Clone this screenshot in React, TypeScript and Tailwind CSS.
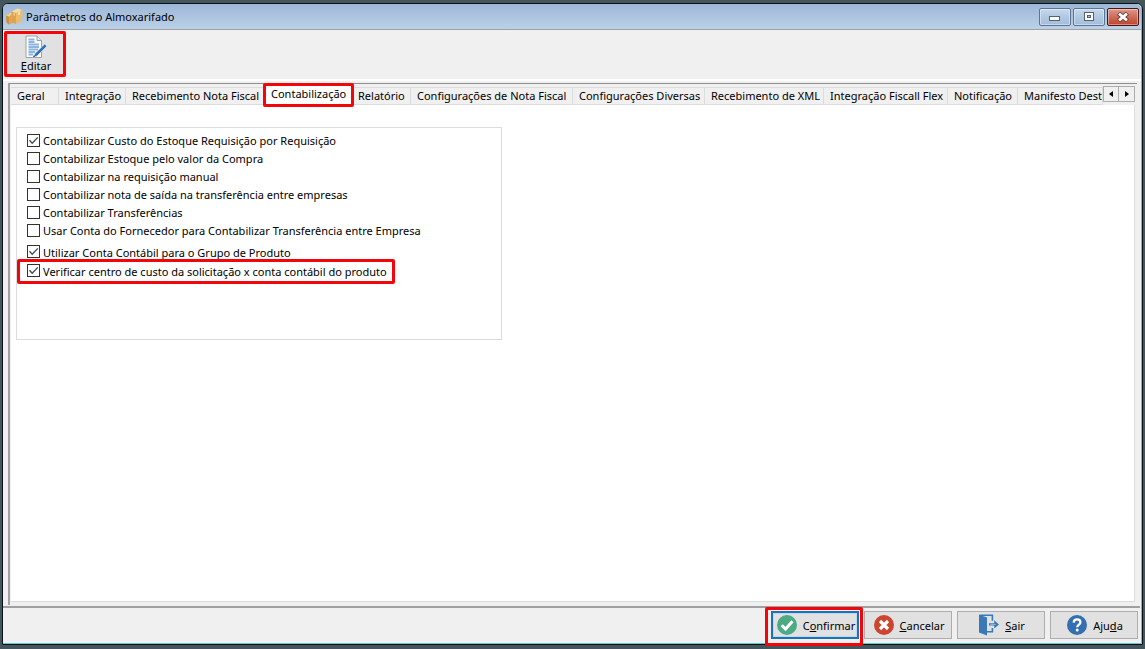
import { useState } from "react";
import type { ReactNode } from "react";

const tabs = [
  { name: "Geral", width: "w-[48px] shrink-0" },
  { name: "Integração", width: "w-[67px] shrink-0" },
  { name: "Recebimento Nota Fiscal", width: "w-[139px] shrink-0" },
  { name: "Contabilização", width: "w-[87px] shrink-0" },
  { name: "Relatório", width: "w-[59px] shrink-0" },
  { name: "Configurações de Nota Fiscal", width: "w-[162px] shrink-0" },
  { name: "Configurações Diversas", width: "w-[132px] shrink-0" },
  { name: "Recebimento de XML", width: "w-[119px] shrink-0" },
  { name: "Integração Fiscall Flex", width: "w-[124px] shrink-0" },
  { name: "Notificação", width: "w-[70px] shrink-0" },
  { name: "Manifesto Dest", width: "min-w-0 flex-1 overflow-hidden" },
];

const costOptions = [
  { id: "custo", label: "Contabilizar Custo do Estoque Requisição por Requisição", on: true },
  { id: "compra", label: "Contabilizar Estoque pelo valor da Compra", on: false },
  { id: "manual", label: "Contabilizar na requisição manual", on: false },
  { id: "saida", label: "Contabilizar nota de saída na transferência entre empresas", on: false },
  { id: "transf", label: "Contabilizar Transferências", on: false },
  { id: "fornecedor", label: "Usar Conta do Fornecedor para Contabilizar Transferência entre Empresa", on: false },
];

function Highlight({ place }: { place: string }) {
  return (
    <span
      aria-hidden="true"
      className={`pointer-events-none absolute z-10 rounded-[2px] border-3 border-[#f2060a] ${place}`}
    />
  );
}

function Option({ id, label, on }: { id: string; label: string; on: boolean }) {
  return (
    <>
      <span className="relative mb-[2px] size-[13px] shrink-0">
        <input
          id={id}
          type="checkbox"
          defaultChecked={on}
          className="peer block size-[13px] appearance-none border border-[#333] bg-white"
        />
        <svg
          viewBox="0 0 13 13"
          className="pointer-events-none absolute inset-0 hidden size-[13px] peer-checked:block"
          fill="none"
          stroke="#3c4a55"
          strokeWidth="1.3"
        >
          <path d="M2.5 6.3 5.2 9.2 10.8 3.4" />
        </svg>
      </span>
      <label htmlFor={id} className="whitespace-nowrap">
        {label}
      </label>
    </>
  );
}

function BoxIcon() {
  return (
    <svg viewBox="0 0 17 17" className="size-[17px] shrink-0">
      <path d="M0 7.5 5 4.5 8 5.5V14.5L3 16.5 .5 14.5Z" fill="#e0a850" />
      <path d="M0 7.5 3 8.5V16.5L.5 14.5Z" fill="#c99144" />
      <path d="M0 7.5 5 4.5 7 5.5 3 8.5Z" fill="#f3d090" />
      <path d="M5.5 3.5 11.5 .5 16.5 2 10 5Z" fill="#f8dca4" />
      <path d="M5.5 3.5 10 5V16L5.5 14Z" fill="#dba44c" />
      <path d="M10 5 16.5 2 16 12.5 10 16Z" fill="#eebc69" />
      <path d="M12.4 3.9 14 3.2V6.5L12.4 7.3Z" fill="#fbe9c0" />
      <path d="M7.5 4.2 8.8 4.6V8L7.5 7.5Z" fill="#f4d190" />
    </svg>
  );
}

function EditIcon() {
  return (
    <svg viewBox="0 0 22 24" className="h-6 w-[22px]">
      <path d="M1 1H12L16.5 5.5V22.5H1Z" fill="#fafcfd" stroke="#9aa2a7" />
      <path d="M12 1V5.5H16.5" fill="#e2e6e9" stroke="#9aa2a7" />
      <path d="M3.5 4.5H9.5M3.5 7H9.5M3.5 9.5H14M3.5 12H14M3.5 14.5H13M3.5 17H10M3.5 19.5H8" stroke="#8db6df" strokeWidth="1.8" />
      <path d="M19.7 9 21.9 11.2 12 21 8 22.5 9.7 18.8Z" fill="#2f70b7" stroke="#f4f7f9" strokeWidth=".6" />
      <path d="M8 22.5 8.8 20.6 10 21.7Z" fill="#22384f" />
    </svg>
  );
}

function ConfirmIcon() {
  return (
    <svg viewBox="0 0 20 20" className="size-5">
      <circle cx="10" cy="10" r="10" fill="#4caa84" />
      <path d="M4.7 10.2 8.5 14 15.5 6.3" fill="none" stroke="#fff" strokeWidth="3" />
    </svg>
  );
}

function CancelIcon() {
  return (
    <svg viewBox="0 0 20 20" className="size-5">
      <circle cx="10" cy="10" r="10" fill="#cb4530" />
      <path d="M6 6 14 14M14 6 6 14" fill="none" stroke="#fff" strokeWidth="3.2" />
    </svg>
  );
}

function ExitIcon() {
  return (
    <svg viewBox="0 0 20 22" className="h-[22px] w-5">
      <path d="M1 1.3H13.4V6.8M13.4 14V17.8H8" fill="none" stroke="#3a78b8" strokeWidth="1.6" />
      <path d="M0 .5 8 3.5V21.5L0 18.5Z" fill="#3a78b8" />
      <path d="M10 9.3H15.2V6.3L20 10.4 15.2 14.5V11.5H10Z" fill="#3a78b8" />
      <path d="M11.2 10.4H16.8" stroke="#a9c6e2" strokeWidth=".8" />
    </svg>
  );
}

function HelpIcon() {
  return (
    <svg viewBox="0 0 20 20" className="size-5">
      <circle cx="10" cy="10" r="10" fill="#346fb0" />
      <path d="M6.7 7.6C6.8 5.4 8.2 4.4 10.1 4.4 12.1 4.4 13.4 5.6 13.4 7.2 13.4 9.5 10.2 9.6 10.2 12.2" fill="none" stroke="#fff" strokeWidth="2.3" />
      <circle cx="10.2" cy="15" r="1.5" fill="#fff" />
    </svg>
  );
}

function CaptionButton({ label, danger, children }: { label: string; danger?: boolean; children: ReactNode }) {
  const tone = danger
    ? "border-[#4e1512] from-[#dc9a8c] via-[#cf6f5c] via-45% to-[#c0432a]"
    : "border-[#5d7590] from-[#c7d9ec] via-[#b2cae4] via-45% to-[#a3bddb]";
  return (
    <button
      type="button"
      aria-label={label}
      className={`flex h-[18px] w-8 items-center justify-center rounded-[2px] border bg-linear-to-b shadow-[inset_0_0_0_1px_rgba(255,255,255,0.4)] ${tone}`}
    >
      {children}
    </button>
  );
}

function FooterButton({ icon, focused, children }: { icon: ReactNode; focused?: boolean; children: ReactNode }) {
  const frame = focused
    ? "border-2 border-[#2070b4] shadow-[inset_0_0_0_1px_#b5dcf2]"
    : "border border-[#adadad]";
  return (
    <button type="button" className={`flex h-7 w-[88px] items-center justify-center gap-[6px] bg-[#e1e1e1] pl-[2px] ${frame}`}>
      {icon}
      <span className="pt-px">{children}</span>
    </button>
  );
}

export default function App() {
  const [active, setActive] = useState("Contabilização");

  return (
    <div className="flex h-screen flex-col bg-[#43565b] px-[2px] pt-[3px] pb-1 font-['Noto_Sans',sans-serif] text-[11px] leading-4 text-black">
      <div className="flex min-h-0 flex-1 flex-col rounded-t-md border border-[#0a1218] bg-[#f0f0f0] shadow-[inset_-1px_-1px_0_#62c4d6]">
        <header className="mr-px flex h-[25px] shrink-0 items-center gap-[3px] rounded-t-[5px] bg-linear-to-b from-[#9db7d7] to-[#bbd1e9] pr-[2px] pl-[3px]">
          <BoxIcon />
          <h1 className="flex-1">Parâmetros do Almoxarifado</h1>
          <div className="flex gap-[2px]">
            <CaptionButton label="Minimizar">
              <svg viewBox="0 0 12 8" className="h-2 w-3">
                <rect x=".5" y="3.5" width="10" height="4" fill="#fff" stroke="#55636f" />
              </svg>
            </CaptionButton>
            <CaptionButton label="Maximizar">
              <svg viewBox="0 0 12 9" className="h-[9px] w-3">
                <rect x="1.5" y=".5" width="9" height="8" fill="#fff" stroke="#55636f" />
                <rect x="4.5" y="3.5" width="3" height="2" fill="#a9c2de" stroke="#55636f" />
              </svg>
            </CaptionButton>
            <CaptionButton label="Fechar" danger>
              <svg viewBox="0 0 12 10" className="h-[10px] w-3">
                <path d="M1.5 1.3 10.5 8.7M10.5 1.3 1.5 8.7" stroke="#59302f" strokeWidth="4.4" />
                <path d="M2 1.7 10 8.3M10 1.7 2 8.3" stroke="#fff" strokeWidth="2.8" />
              </svg>
            </CaptionButton>
          </div>
        </header>

        <div className="mr-px flex h-[52px] shrink-0 items-start border-t border-b-2 border-t-[#a0a0a0] border-b-white px-px pt-px">
          <button type="button" className="relative flex h-[46px] w-[62px] flex-col items-center bg-[#e1e1e1] pt-[4px] pl-[2px]">
            <EditIcon />
            <span className="leading-[14px]">
              <u>E</u>ditar
            </span>
            <Highlight place="inset-0" />
          </button>
        </div>

        <main className="mx-[5px] mt-[2px] flex min-h-0 flex-1 flex-col border-t border-l-2 border-t-[#8f8f8f] border-l-[#a2a2a6] pr-[2px] pb-[3px] pl-px">
          <div className="flex shrink-0 items-start pt-[2px]">
            <div role="tablist" className="flex h-[19px] min-w-0 flex-1 items-end overflow-x-clip">
              {tabs.map((tab) => {
                const selected = tab.name === active;
                return (
                  <button
                    key={tab.name}
                    type="button"
                    role="tab"
                    aria-selected={selected}
                    onClick={() => setActive(tab.name)}
                    className={`relative pl-[6px] text-left whitespace-nowrap ${tab.width} ${
                      selected
                        ? "h-5 bg-white pb-[3px]"
                        : "h-[18px] border-t border-r border-b border-[#dcdcdc] bg-[#f0f0f0]"
                    }`}
                  >
                    {tab.name}
                    {selected && <Highlight place="-inset-x-[2px] -top-[2px] -bottom-[2px]" />}
                  </button>
                );
              })}
            </div>
            <div className="flex shrink-0">
              <button type="button" aria-label="Abas anteriores" className="flex h-4 w-4 items-center justify-center border border-[#adadad] bg-[#f0f0f0]">
                <svg viewBox="0 0 4 6" className="h-[6px] w-1"><path d="M4 0V6L0 3Z" /></svg>
              </button>
              <button type="button" aria-label="Próximas abas" className="flex h-4 w-4 items-center justify-center border border-l-0 border-[#adadad] bg-[#f0f0f0]">
                <svg viewBox="0 0 4 6" className="h-[6px] w-1"><path d="M0 0V6L4 3Z" /></svg>
              </button>
            </div>
          </div>

          <section className="min-h-0 flex-1 border-r border-b border-[#dcdcdc] bg-white pt-[22px] pl-[5px]">
            <fieldset className="h-[213px] w-[486px] border border-[#dcdcdc] px-[10px] pt-1">
              <ul>
                {costOptions.map((option) => (
                  <li key={option.id} className="flex h-[18px] items-center gap-[3px]">
                    <Option {...option} />
                  </li>
                ))}
              </ul>
              <ul className="mt-[3px]">
                <li className="flex h-[19px] items-center gap-[3px]">
                  <Option id="grupo" label="Utilizar Conta Contábil para o Grupo de Produto" on />
                </li>
                <li className="relative flex h-[19px] w-fit items-center gap-[3px]">
                  <Option id="centro" label="Verificar centro de custo da solicitação x conta contábil do produto" on />
                  <Highlight place="-inset-y-[3px] -right-[8px] -left-[10px]" />
                </li>
              </ul>
            </fieldset>
          </section>
        </main>

        <footer className="mt-px mr-[2px] flex h-[38px] shrink-0 justify-end gap-[5px] border-t-2 border-[#a0a0a0] pt-[3px] pr-[2px]">
          <div className="relative">
            <FooterButton focused icon={<ConfirmIcon />}>
              C<u>o</u>nfirmar
            </FooterButton>
            <Highlight place="-top-[4px] -right-[4px] -bottom-[2px] -left-[6px]" />
          </div>
          <FooterButton icon={<CancelIcon />}>
            <u>C</u>ancelar
          </FooterButton>
          <FooterButton icon={<ExitIcon />}>
            <u>S</u>air
          </FooterButton>
          <FooterButton icon={<HelpIcon />}>
            Aju<u>d</u>a
          </FooterButton>
        </footer>
      </div>
    </div>
  );
}
